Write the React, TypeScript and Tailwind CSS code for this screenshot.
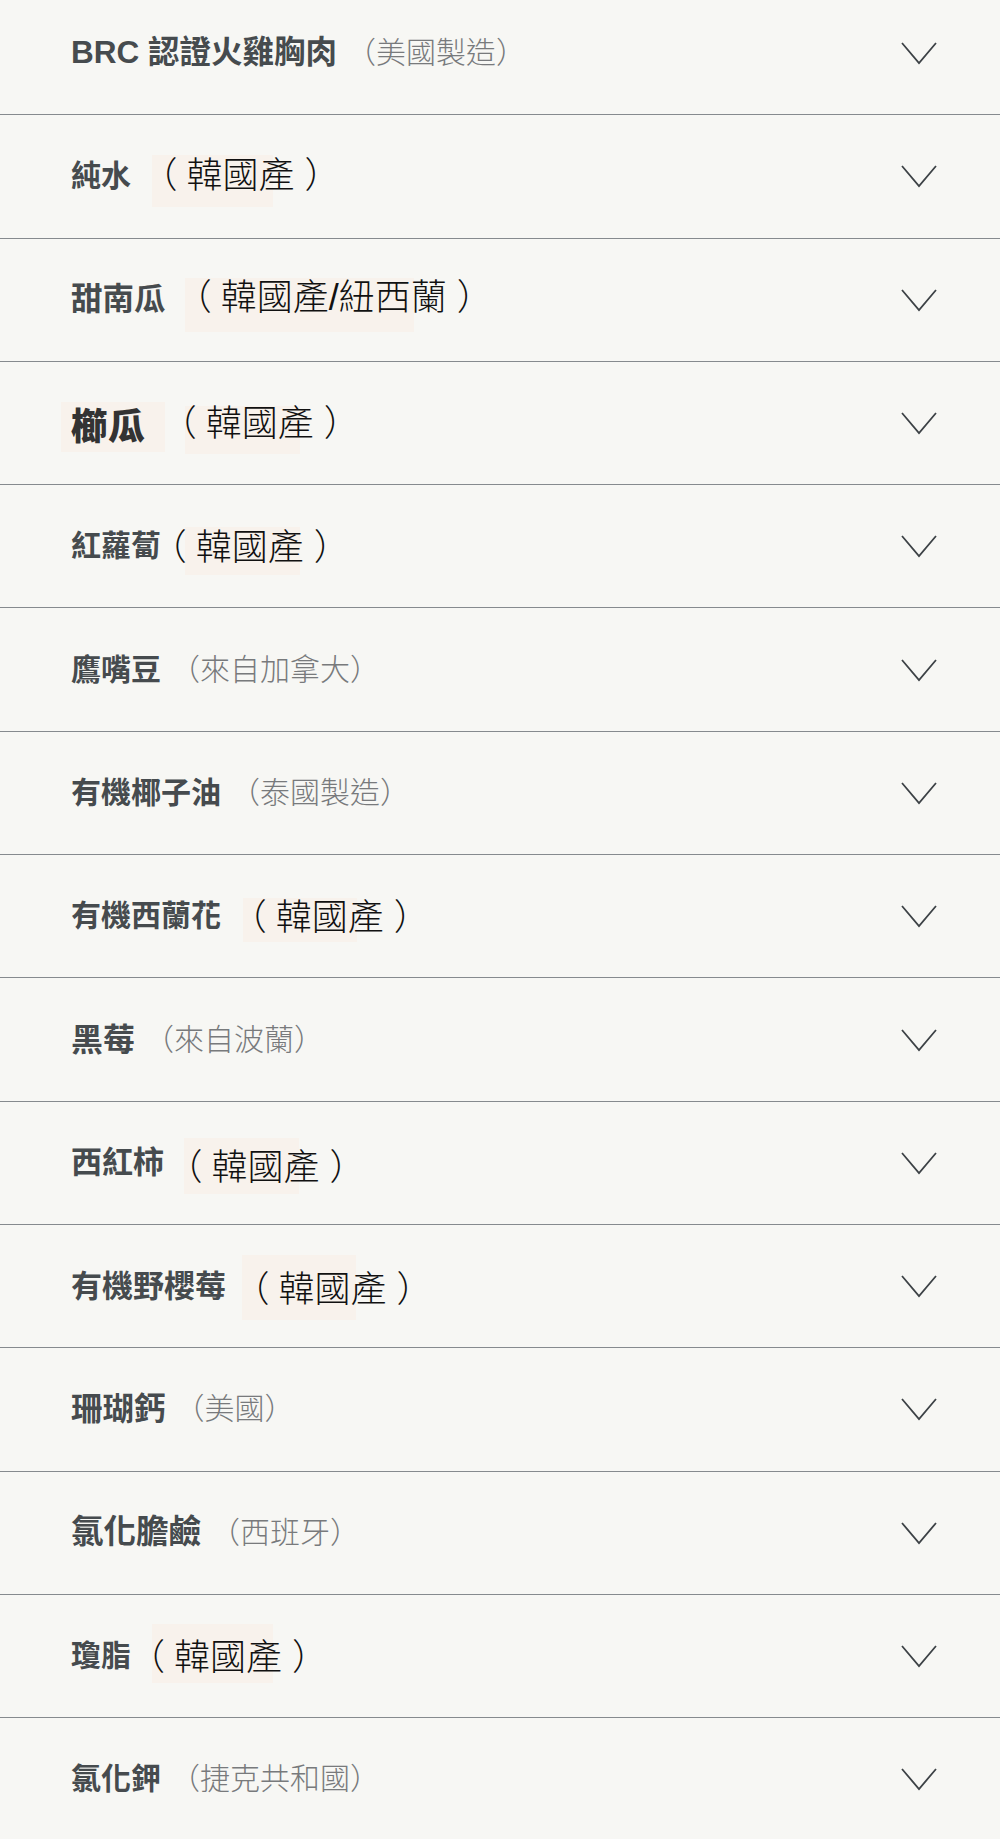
import React from 'react';

type Row = {
  name: string;
  note: string;
  // 'a' = grey note set right after the name, 'b' = black pasted note with a highlight
  kind: 'a' | 'b';
  nameClass?: string;
  noteClass?: string;
};

const NAME = 'leading-none font-bold text-[#464b4e]';

const rows: Row[] = [
  { name: 'BRC 認證火雞胸肉', note: '美國製造', kind: 'a', nameClass: 'text-[31.5px]' },
  {
    name: '純水',
    note: '韓國產',
    kind: 'b',
    noteClass:
      'ml-[19.5px] pt-[3.5px] pb-[13px] mt-[9.5px] bg-[linear-gradient(to_right,transparent_1.5px,#f8f2ec_1.5px,#f8f2ec_122.5px,transparent_122.5px)]',
  },
  {
    name: '甜南瓜',
    note: '韓國產/紐西蘭',
    kind: 'b',
    nameClass: 'text-[31.5px]',
    noteClass:
      'ml-[19.2px] pt-[1.5px] pb-[16px] mt-[10.5px] bg-[linear-gradient(to_right,#f8f2ec_229px,transparent_229px)]',
  },
  {
    name: '櫛瓜',
    note: '韓國產',
    kind: 'b',
    nameClass:
      'text-[37px] !font-black !text-[#333333] -ml-[10px] pl-[10px] pr-[20px] pt-[7px] pb-[6px] mt-[7px] bg-[#f8f2ec]',
    noteClass:
      'ml-[4.7px] pt-0 pb-[12px] mt-[13px] bg-[linear-gradient(to_right,transparent_15.3px,#f8f2ec_15.3px,#f8f2ec_129.6px,transparent_129.6px)]',
  },
  {
    name: '紅蘿蔔',
    note: '韓國產',
    kind: 'b',
    noteClass:
      '-ml-[1.3px] pt-[3px] pb-[9.5px] mt-[9.5px] bg-[linear-gradient(to_right,transparent_25.3px,#f8f2ec_25.3px,#f8f2ec_139.6px,transparent_139.6px)]',
  },
  { name: '鷹嘴豆', note: '來自加拿大', kind: 'a' },
  { name: '有機椰子油', note: '泰國製造', kind: 'a' },
  {
    name: '有機西蘭花',
    note: '韓國產',
    kind: 'b',
    noteClass:
      'ml-[18.7px] pt-[1.5px] pb-[6px] mt-[7.5px] bg-[linear-gradient(to_right,transparent_3px,#f8f2ec_3px,#f8f2ec_117px,transparent_117px)]',
  },
  { name: '黑莓', note: '來自波蘭', kind: 'a', nameClass: 'text-[32px]' },
  {
    name: '西紅柿',
    note: '韓國產',
    kind: 'b',
    nameClass: 'text-[31px]',
    noteClass:
      'ml-[11.4px] pt-[12.7px] pb-[8px] mt-[6.3px] bg-[linear-gradient(to_right,transparent_9.4px,#f8f2ec_9.4px,#f8f2ec_123.9px,transparent_123.9px)]',
  },
  {
    name: '有機野櫻莓',
    note: '韓國產',
    kind: 'b',
    nameClass: 'text-[31px]',
    noteClass:
      'ml-[16.4px] pt-[17px] pb-[12px] mt-[2px] bg-[linear-gradient(to_right,#f8f2ec_114.3px,transparent_114.3px)]',
  },
  { name: '珊瑚鈣', note: '美國', kind: 'a', nameClass: 'text-[31.5px]' },
  { name: '氯化膽鹼', note: '西班牙', kind: 'a', nameClass: 'text-[32.5px]' },
  {
    name: '瓊脂',
    note: '韓國產',
    kind: 'b',
    noteClass:
      'ml-[7px] pt-[15.5px] pb-[7.8px] mb-[4.7px] bg-[linear-gradient(to_right,transparent_13.7px,#f8f2ec_13.7px,#f8f2ec_134.7px,transparent_134.7px)]',
  },
  { name: '氯化鉀', note: '捷克共和國', kind: 'a' },
];

function Chevron() {
  return (
    <svg width="36" height="24" viewBox="0 0 36 24" fill="none" className="shrink-0">
      <path d="M1 2 L18 22 L35 2" stroke="#3d4246" strokeWidth="1.8" strokeLinejoin="miter" />
    </svg>
  );
}

function IngredientRow({ row }: { row: Row }) {
  return (
    <div className="h-[123.3px] border-b-[1.5px] border-[#868a8e] flex items-center justify-between pl-[71px] pr-[63px]">
      <div className="flex items-center">
        <span className={NAME + ' ' + (row.nameClass ?? 'text-[30px]')}>{row.name}</span>
        {row.kind === 'a' ? (
          <span className="ml-[9px] text-[30px] leading-none font-light text-[#787a7c]">（{row.note}）</span>
        ) : (
          <span className={'text-[36px] leading-none font-light text-[#111111] ' + row.noteClass}>
            <span className="-ml-[9px] mr-[9px]">（</span>
            {row.note}
            <span className="ml-[10px]">）</span>
          </span>
        )}
      </div>
      <Chevron />
    </div>
  );
}

export default function App() {
  return (
    <div
      className="min-h-screen bg-[#f7f7f4] overflow-hidden"
      style={{ fontFamily: "'Liberation Sans', 'Noto Sans CJK TC', 'Noto Sans', sans-serif" }}
    >
      <div className="-mt-[8px]">
        {rows.map((row, i) => (
          <IngredientRow key={i} row={row} />
        ))}
      </div>
    </div>
  );
}
